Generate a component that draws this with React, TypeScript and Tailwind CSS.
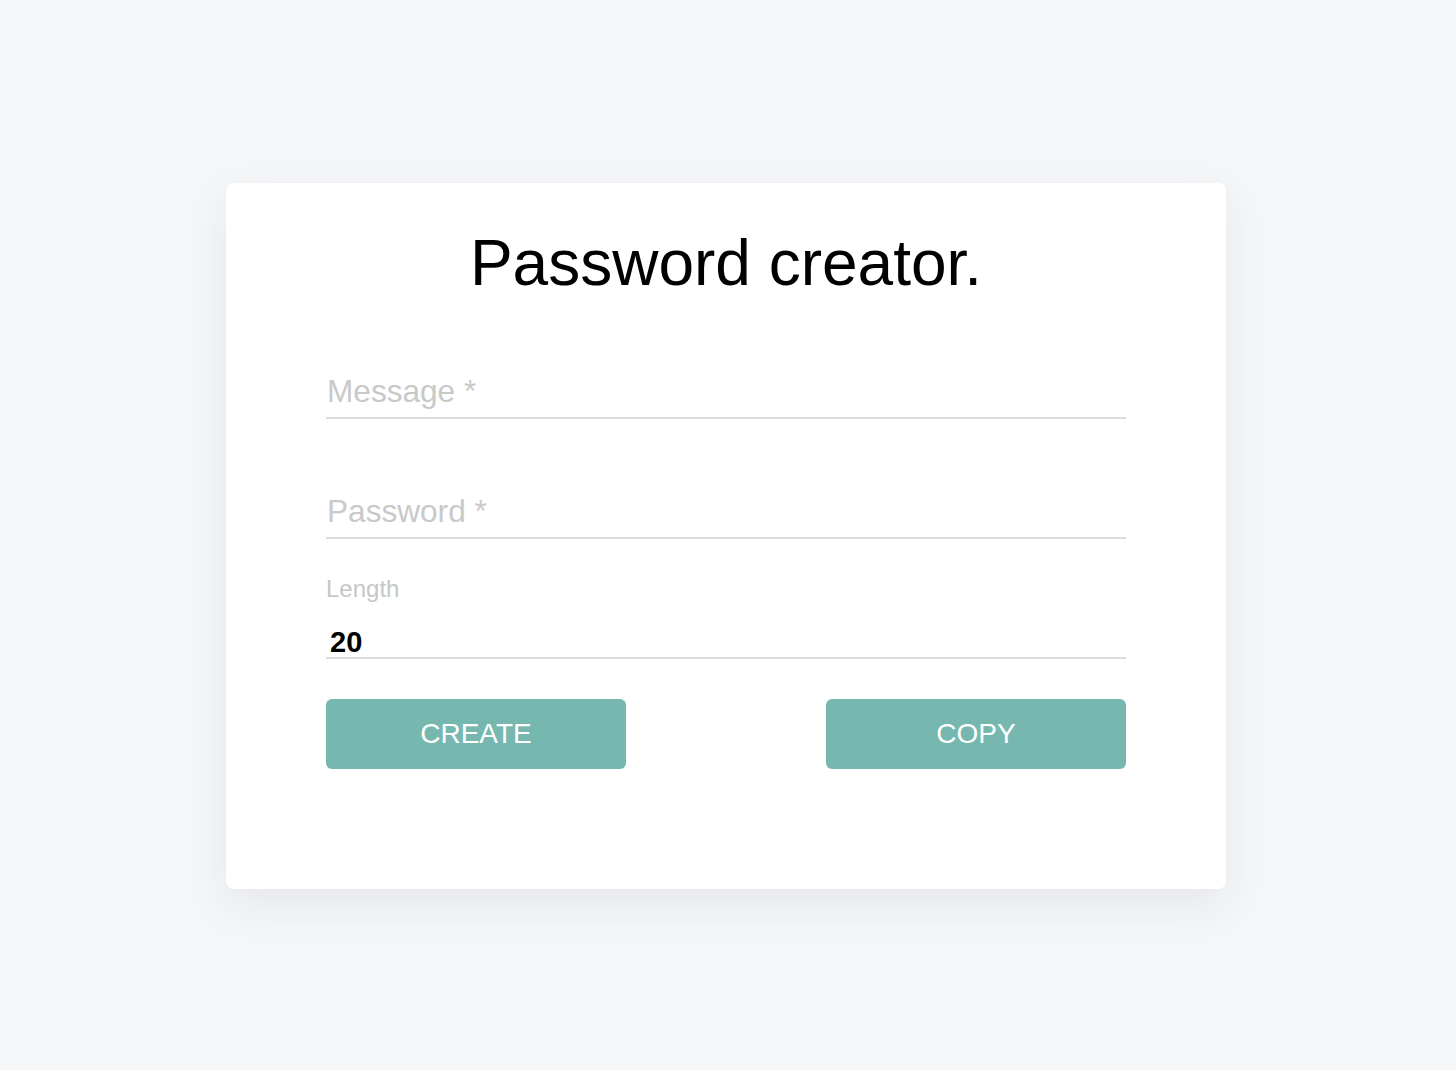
import { useState } from "react";

const font = { fontFamily: '"Liberation Sans", Arial, Helvetica, sans-serif' };

export default function App() {
  const [message, setMessage] = useState("");
  const [password, setPassword] = useState("");
  const [length, setLength] = useState("20");

  return (
    <div className="min-h-screen bg-[#f5f6f8] pt-[183px]" style={font}>
      {/* Card */}
      <div className="ml-[226px] w-[1000px] rounded-lg bg-white px-[100px] pt-[48px] pb-[120px] shadow-[0_16px_44px_rgba(30,45,70,0.07)]">
        <h1 className="text-center text-[64px] leading-none font-light text-black">
          Password creator.
        </h1>

        {/* Message */}
        <input
          type="text"
          value={message}
          onChange={(e) => setMessage(e.target.value)}
          placeholder="Message *"
          className="mt-[70px] block h-[54px] w-full border-b-2 border-[#dcdcdc] bg-transparent pl-px text-[31.6px] text-black outline-none placeholder:text-[#c9c9c9]"
        />

        {/* Password */}
        <input
          type="text"
          value={password}
          onChange={(e) => setPassword(e.target.value)}
          placeholder="Password *"
          className="mt-[66px] block h-[54px] w-full border-b-2 border-[#dcdcdc] bg-transparent pl-px text-[31.6px] text-black outline-none placeholder:text-[#c9c9c9]"
        />

        {/* Length */}
        <label className="mt-[38px] block text-[24px] leading-none text-[#c6c6c6]">Length</label>
        <input
          type="text"
          value={length}
          onChange={(e) => setLength(e.target.value)}
          className="mt-[28px] block h-[30px] w-full border-b-2 border-[#dcdcdc] bg-transparent pl-1 text-[29px] font-bold text-black outline-none"
        />

        {/* Buttons */}
        <div className="mt-10 flex justify-between">
          <button className="h-[70px] w-[300px] rounded-md bg-[#76b7b0] text-[28px] text-white">
            CREATE
          </button>
          <button className="h-[70px] w-[300px] rounded-md bg-[#76b7b0] text-[28px] text-white">
            COPY
          </button>
        </div>
      </div>
    </div>
  );
}
